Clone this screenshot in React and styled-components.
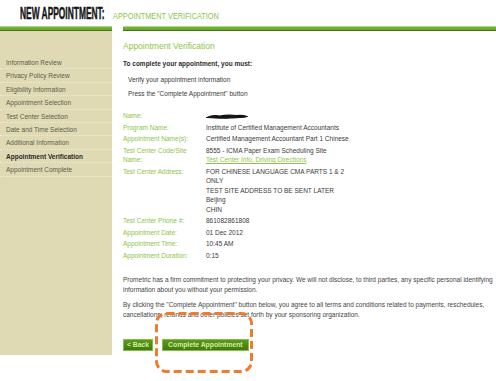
import React from 'react';
import styled, { createGlobalStyle } from 'styled-components';

const GlobalStyle = createGlobalStyle`
  html, body {
    margin: 0;
    padding: 0;
    background: #ffffff;
    overflow: hidden;
  }
  body {
    font-family: "Liberation Sans", Arial, sans-serif;
  }
`;

const Page = styled.div`
  width: 496px;
  height: 381px;
  background: #ffffff;
`;

const Header = styled.header`
  box-sizing: border-box;
  height: 26px;
  padding: 5px 0 0 20px;
  display: flex;
  align-items: baseline;
  white-space: nowrap;
`;

const TitleBox = styled.div`
  width: ${props => props.width}px;
  overflow: visible;
`;

const BigTitle = styled.span`
  display: inline-block;
  font-size: 16.8px;
  line-height: 1;
  font-weight: 700;
  color: #161616;
  -webkit-text-stroke: 0.5px #161616;
  transform: scaleX(0.5);
  transform-origin: left center;
`;

const SubTitle = styled.span`
  display: inline-block;
  font-size: 9.8px;
  line-height: 1;
  color: #8cc449;
  transform: scaleX(0.75);
  transform-origin: left center;
`;

const Main = styled.div`
  display: flex;
  align-items: stretch;
`;

const Rule = styled.div`
  height: 5px;
  background: linear-gradient(
    to bottom,
    #b3d885 0px,
    #b3d885 1px,
    #79b43b 1px,
    #6aa62c 4px,
    #41751a 4px,
    #41751a 5px
  );
`;

const Sidebar = styled.nav`
  width: 112px;
  background: #dfdab4;
  display: flex;
  flex-direction: column;
`;

const StepList = styled.ul`
  list-style: none;
  margin: 0;
  padding: 25px 0 0 0;
`;

const Step = styled.li`
  box-sizing: border-box;
  height: 13.4px;
  line-height: 13.4px;
  padding-left: 6px;
  font-size: 6.5px;
  white-space: nowrap;
  color: ${props => (props.active ? '#2b2b2b' : '#5c5a4c')};
  font-weight: ${props => (props.active ? 700 : 400)};
  border-bottom: 1px dotted rgba(255, 255, 255, 0.45);
`;

const Content = styled.main`
  flex: 1;
  margin-left: 11px;
  padding-bottom: 4px;
  display: flex;
  flex-direction: column;
  align-items: flex-start;
  color: #3a3a3a;
  font-size: 6.5px;
`;

const Body = styled.div`
  width: 100%;
`;

const Heading = styled.h2`
  margin: 10px 0 0;
  font-size: 8.5px;
  line-height: 10px;
  font-weight: 400;
  color: #8cc449;
`;

const Intro = styled.p`
  margin: 8px 0 0;
  line-height: 10px;
  font-weight: 700;
  color: #2c2c2c;
`;

const Instruction = styled.p`
  margin: ${props => (props.first ? '6px' : '4px')} 0 0 5px;
  line-height: 10px;
  color: #3a3a3a;
`;

const Details = styled.dl`
  margin: 12px 0 0;
  display: grid;
  grid-template-columns: 83px 1fr;
  row-gap: 2px;
  line-height: 9.5px;
`;

const Label = styled.dt`
  margin: 0;
  color: #8cc449;
`;

const Value = styled.dd`
  margin: 0;
  color: #3a3a3a;
  white-space: nowrap;
`;

const Link = styled.a`
  color: #8cc449;
  text-decoration: underline;
`;

const Note = styled.p`
  margin: ${props => props.gap}px 0 0;
  line-height: 10px;
  color: #444444;
  white-space: nowrap;
`;

const ButtonRow = styled.div`
  position: relative;
  margin-top: 19px;
  display: flex;
  gap: 9px;
`;

const Button = styled.button`
  height: 12px;
  padding: 0 ${props => props.pad}px;
  border: 1px solid #86bb48;
  background: linear-gradient(to bottom, #5b9a1b, #3f7b0b);
  color: #d4eba4;
  font-family: "Liberation Sans", Arial, sans-serif;
  font-size: 6.8px;
  font-weight: 700;
  line-height: 10px;
  cursor: pointer;
`;

const Highlight = styled.svg`
  position: absolute;
  left: 32px;
  top: -27px;
  pointer-events: none;
`;

const steps = [
  'Information Review',
  'Privacy Policy Review',
  'Eligibility Information',
  'Appointment Selection',
  'Test Center Selection',
  'Date and Time Selection',
  'Additional Information',
  'Appointment Verification',
  'Appointment Complete',
];

function Redacted() {
  return (
    <svg width="42" height="7" viewBox="0 0 42 7" style={{ verticalAlign: 'middle' }}>
      <path
        d="M1 4.5 C6 2 10 2.5 14 3 C20 1.5 26 2 31 2.5 C35 2 38 2.5 41 3.5 C37 5 30 4.5 24 5 C16 5.5 8 5 1 4.5 Z"
        fill="#141414"
        stroke="#141414"
        strokeWidth="1.2"
      />
    </svg>
  );
}

export default function App() {
  return (
    <Page>
      <GlobalStyle />
      <Header>
        <TitleBox width={93}>
          <BigTitle>NEW APPOINTMENT:</BigTitle>
        </TitleBox>
        <TitleBox width={120}>
          <SubTitle>APPOINTMENT VERIFICATION</SubTitle>
        </TitleBox>
      </Header>
      <Main>
        <Sidebar>
          <Rule />
          <StepList>
            {steps.map((s) => (
              <Step key={s} active={s === 'Appointment Verification'}>{s}</Step>
            ))}
          </StepList>
        </Sidebar>
        <Content>
          <Body>
            <Rule />
            <Heading>Appointment Verification</Heading>
            <Intro>To complete your appointment, you must:</Intro>
            <Instruction first>Verify your appointment information</Instruction>
            <Instruction>Press the "Complete Appointment" button</Instruction>
            <Details>
              <Label>Name:</Label>
              <Value><Redacted /></Value>
              <Label>Program Name:</Label>
              <Value>Institute of Certified Management Accountants</Value>
              <Label>Appointment Name(s):</Label>
              <Value>Certified Management Accountant Part 1 Chinese</Value>
              <Label>Test Center Code/Site<br />Name:</Label>
              <Value>
                8555 - ICMA Paper Exam Scheduling Site<br />
                <Link href="#">Test Center Info, Driving Directions</Link>
              </Value>
              <Label>Test Center Address:</Label>
              <Value>
                FOR CHINESE LANGUAGE CMA PARTS 1 &amp; 2<br />
                ONLY<br />
                TEST SITE ADDRESS TO BE SENT LATER<br />
                Beijing<br />
                CHIN
              </Value>
              <Label>Test Center Phone #:</Label>
              <Value>861082861808</Value>
              <Label>Appointment Date:</Label>
              <Value>01 Dec 2012</Value>
              <Label>Appointment Time:</Label>
              <Value>10:45 AM</Value>
              <Label>Appointment Duration:</Label>
              <Value>0:15</Value>
            </Details>
            <Note gap={15}>
              Prometric has a firm commitment to protecting your privacy. We will not disclose, to third parties, any specific personal identifying<br />
              information about you without your permission.
            </Note>
            <Note gap={5}>
              By clicking the "Complete Appointment" button below, you agree to all terms and conditions related to payments, reschedules,<br />
              cancellations, refunds and other policies set forth by your sponsoring organization.
            </Note>
          </Body>
          <ButtonRow>
            <Button pad={3}>&lt; Back</Button>
            <Button pad={5}>Complete Appointment</Button>
            <Highlight width="98" height="61" viewBox="0 0 98 61">
              <rect
                x="1.5"
                y="1.5"
                width="95"
                height="58"
                rx="10"
                fill="none"
                stroke="#ef7c2c"
                strokeWidth="3"
                strokeDasharray="8 4"
              />
            </Highlight>
          </ButtonRow>
        </Content>
      </Main>
    </Page>
  );
}
